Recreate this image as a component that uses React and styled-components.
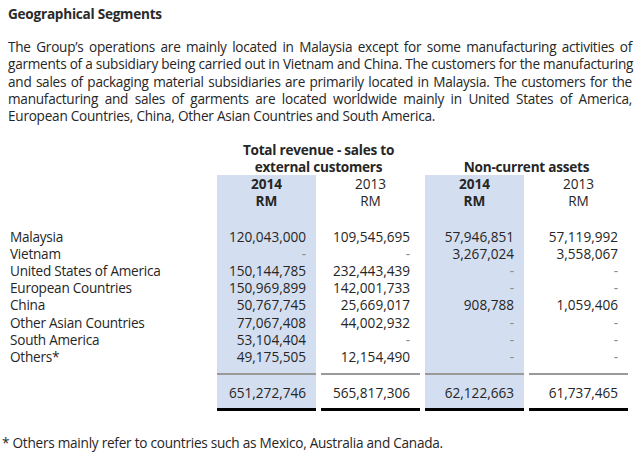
import React from 'react';
import styled, { createGlobalStyle } from 'styled-components';

const GlobalStyle = createGlobalStyle`
  body {
    margin: 0;
    background: #fff;
    color: #262626;
    font-family: 'Open Sans', 'Noto Sans', sans-serif;
    font-size: 13.6px;
    line-height: 17.2px;
    letter-spacing: -0.25px;
  }
`;

const Page = styled.main`
  width: 640px;
  padding: 5px 8px 0 8px;
  box-sizing: border-box;
`;

const Title = styled.h2`
  margin: 0;
  font-size: 13.6px;
  font-weight: 700;
  color: #2a2a2a;
`;

const Lead = styled.p`
  margin: 16px 0 0 0;
`;

const LeadLine = styled.span`
  display: block;
  white-space: nowrap;
  text-align: justify;
  text-align-last: ${(p) => (p.$last ? 'left' : 'justify')};
`;

const Table = styled.section`
  display: grid;
  grid-template-columns: 204px repeat(4, 99px);
  column-gap: 5px;
  margin-top: 16.5px;
`;

const GroupHead = styled.div`
  grid-column: ${(p) => p.$span};
  align-self: end;
  text-align: center;
  font-weight: 700;
`;

const Label = styled.div`
  grid-column: 1;
  padding-left: 2px;
  white-space: nowrap;
`;

const Cell = styled.div`
  background: ${(p) => (p.$shaded ? '#d3dff0' : 'transparent')};
  text-align: ${(p) => (p.$center ? 'center' : 'right')};
  font-weight: ${(p) => (p.$bold ? 700 : 400)};
  padding-right: ${(p) => (p.$center ? '0' : '10px')};
  height: ${(p) => (p.$height ? p.$height : 'auto')};
  color: ${(p) => (p.$muted ? '#8a8a8a' : 'inherit')};
  letter-spacing: 0;
`;

const TotalCell = styled(Cell)`
  border-top: 2px solid #9a9a9a;
  border-bottom: 3px solid #000;
  padding-top: 9px;
  padding-bottom: 7px;
`;

const Footnote = styled.p`
  margin: 23px 0 0 -6px;
`;

const lead = [
  'The Group’s operations are mainly located in Malaysia except for some manufacturing activities of',
  'garments of a subsidiary being carried out in Vietnam and China. The customers for the manufacturing',
  'and sales of packaging material subsidiaries are primarily located in Malaysia. The customers for the',
  'manufacturing and sales of garments are located worldwide mainly in United States of America,',
  'European Countries, China, Other Asian Countries and South America.',
];

const rows = [
  ['Malaysia', '120,043,000', '109,545,695', '57,946,851', '57,119,992'],
  ['Vietnam', '-', '-', '3,267,024', '3,558,067'],
  ['United States of America', '150,144,785', '232,443,439', '-', '-'],
  ['European Countries', '150,969,899', '142,001,733', '-', '-'],
  ['China', '50,767,745', '25,669,017', '908,788', '1,059,406'],
  ['Other Asian Countries', '77,067,408', '44,002,932', '-', '-'],
  ['South America', '53,104,404', '-', '-', '-'],
  ['Others*', '49,175,505', '12,154,490', '-', '-'],
];

const totals = ['651,272,746', '565,817,306', '62,122,663', '61,737,465'];
const shaded = (i) => i === 0 || i === 2;

function App() {
  return (
    <Page>
      <GlobalStyle />
      <Title>Geographical Segments</Title>
      <Lead>
        {lead.map((line, i) => (
          <LeadLine key={i} $last={i === lead.length - 1}>
            {line}
          </LeadLine>
        ))}
      </Lead>

      <Table>
        <Label />
        <GroupHead $span="2 / 4">
          Total revenue - sales to
          <br />
          external customers
        </GroupHead>
        <GroupHead $span="4 / 6">Non-current assets</GroupHead>

        <Label />
        {[0, 1, 2, 3].map((i) => (
          <Cell key={i} $center $shaded={shaded(i)} $bold={shaded(i)}>
            {shaded(i) ? '2014' : '2013'}
            <br />
            RM
          </Cell>
        ))}

        <Label />
        {[0, 1, 2, 3].map((i) => (
          <Cell key={i} $shaded={shaded(i)} $height="18px" />
        ))}

        {rows.map(([name, ...values]) => (
          <React.Fragment key={name}>
            <Label>{name}</Label>
            {values.map((v, i) => (
              <Cell key={i} $shaded={shaded(i)} $muted={v === '-'}>
                {v}
              </Cell>
            ))}
          </React.Fragment>
        ))}

        <Label />
        {[0, 1, 2, 3].map((i) => (
          <Cell key={i} $shaded={shaded(i)} $height="8px" />
        ))}

        <Label />
        {totals.map((v, i) => (
          <TotalCell key={i} $shaded={shaded(i)}>
            {v}
          </TotalCell>
        ))}
      </Table>

      <Footnote>
        * Others mainly refer to countries such as Mexico, Australia and Canada.
      </Footnote>
    </Page>
  );
}

export default App;
